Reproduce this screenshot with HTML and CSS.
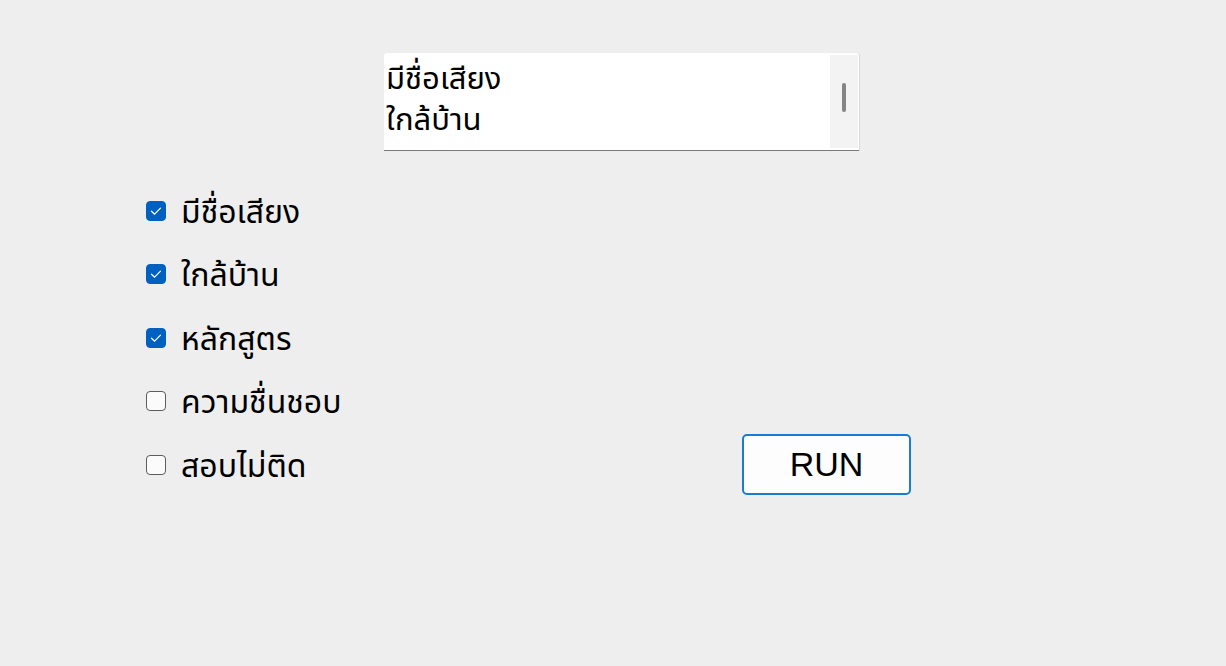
FILE: index.html
```html
<!DOCTYPE html>
<html lang="th">
<head>
<meta charset="utf-8">
<title>Form</title>
<link rel="stylesheet" href="styles.css">
</head>
<body>
<div class="window">
  <div class="listbox">
    <div class="items">
      <div class="item">มีชื่อเสียง</div>
      <div class="item">ใกล้บ้าน</div>
    </div>
    <div class="scrollbar"><div class="thumb"></div></div>
  </div>
  <div class="lower">
    <div class="checks">
      <label class="row"><span class="box on"><svg viewBox="0 0 20 20" width="20" height="20"><path d="M5.5 10.2 L8.6 13.2 L14.5 7.2" fill="none" stroke="#ffffff" stroke-width="1.2" stroke-linecap="round" stroke-linejoin="round"/></svg></span><span class="text">มีชื่อเสียง</span></label>
      <label class="row"><span class="box on"><svg viewBox="0 0 20 20" width="20" height="20"><path d="M5.5 10.2 L8.6 13.2 L14.5 7.2" fill="none" stroke="#ffffff" stroke-width="1.2" stroke-linecap="round" stroke-linejoin="round"/></svg></span><span class="text">ใกล้บ้าน</span></label>
      <label class="row"><span class="box on"><svg viewBox="0 0 20 20" width="20" height="20"><path d="M5.5 10.2 L8.6 13.2 L14.5 7.2" fill="none" stroke="#ffffff" stroke-width="1.2" stroke-linecap="round" stroke-linejoin="round"/></svg></span><span class="text">หลักสูตร</span></label>
      <label class="row"><span class="box"></span><span class="text">ความชื่นชอบ</span></label>
      <label class="row"><span class="box"></span><span class="text">สอบไม่ติด</span></label>
    </div>
    <button class="run">RUN</button>
  </div>
</div>
</body>
</html>
```
FILE: styles.css
```css
html, body {
  margin: 0;
  padding: 0;
  background: #eeeeee;
}
body {
  width: 1226px;
  height: 666px;
  overflow: hidden;
  font-family: "Noto Sans Thai", "Noto Sans", sans-serif;
  color: #000;
}
.window {
  padding-top: 53px;
}
.listbox {
  margin-left: 384px;
  width: 475px;
  height: 97px;
  background: #ffffff;
  border-bottom: 1px solid #7a7a7a;
  border-radius: 3px 3px 0 0;
  display: flex;
  box-shadow: 1px 0 0 #d9d9d9;
}
.items {
  flex: 1;
  padding: 6px 0 0 2px;
  font-size: 31px;
}
.item {
  white-space: nowrap;
  height: 41px;
  line-height: 41px;
}
.scrollbar {
  width: 28px;
  margin: 2px 1px 2px 0;
  background: #f3f3f3;
  display: flex;
  justify-content: center;
  padding-top: 28px;
  box-sizing: border-box;
}
.thumb {
  width: 4px;
  height: 29px;
  background: #858585;
  border-radius: 2px;
}
.lower {
  display: flex;
  align-items: flex-end;
  margin-top: 28px;
  padding-left: 146px;
}
.checks {
  display: flex;
  flex-direction: column;
  width: 596px;
}
.row {
  display: flex;
  align-items: center;
  height: 63.5px;
  gap: 15px;
}
.box {
  width: 20px;
  height: 20px;
  box-sizing: border-box;
  border-radius: 4px;
  border: 1px solid #5c5c5c;
  background: #fbfbfb;
  display: block;
  flex: none;
}
.box svg {
  display: block;
  margin: -1px;
}
.box.on {
  background: #0060bf;
  border-color: #0060bf;
}
.text {
  font-size: 32px;
  line-height: 44px;
  white-space: nowrap;
  position: relative;
  top: 2px;
}
.run {
  width: 169px;
  height: 61px;
  margin-bottom: 2px;
  background: #fdfdfd;
  border: 2px solid #1a7ad4;
  border-radius: 5px;
  font-family: "Liberation Sans", Arial, sans-serif;
  font-size: 34px;
  color: #000;
  padding: 0;
}
```
